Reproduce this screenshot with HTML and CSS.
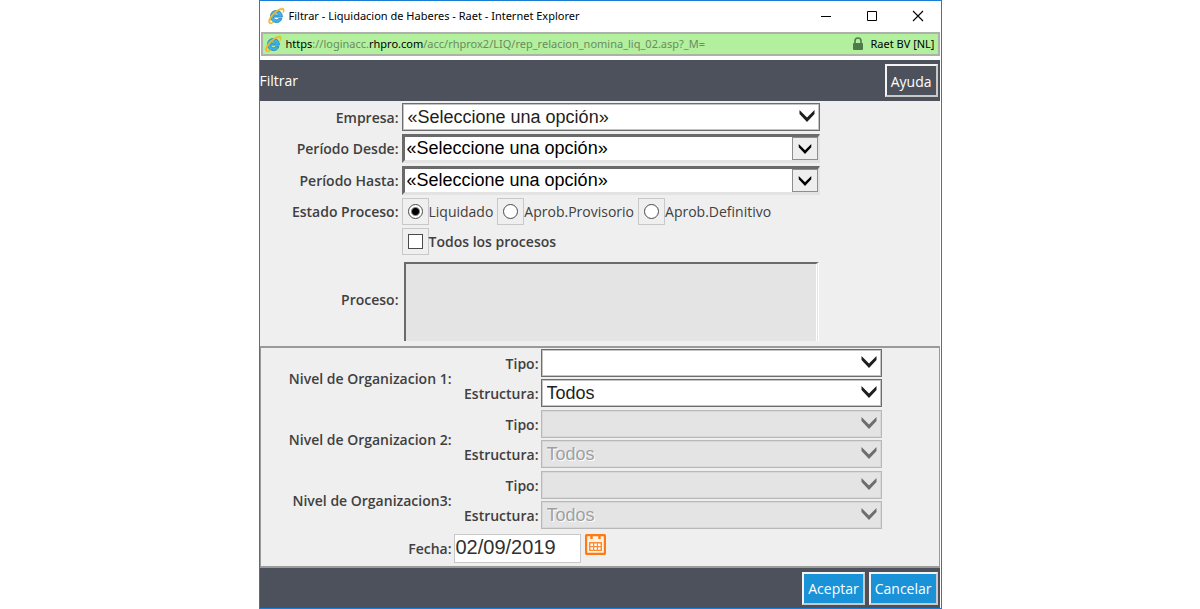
FILE: index.html
```html
<!DOCTYPE html>
<html lang="es">
<head>
<meta charset="utf-8">
<title>Filtrar - Liquidacion de Haberes - Raet - Internet Explorer</title>
<link rel="stylesheet" href="styles.css">
</head>
<body>
<svg class="defs" width="0" height="0" aria-hidden="true">
  <symbol id="ie" viewBox="0 0 18 18">
    <path d="M9.400 3.600a5.900 5.900 0 1 0 5.500 8h-3.300c-.6.900-1.300 1.200-2.300 1.200-1.600 0-2.600-1-2.700-2.700h8.700c.2-3.800-2-6.500-5.900-6.500zM6.700 7.900c.3-1.200 1.200-1.900 2.600-1.900s2.300.7 2.500 1.900z" fill="#42b3e8" stroke="#2384c4" stroke-width=".9"/>
    <path d="M3 16.700C-.5 15 3.300 8.300 8.500 4.300 12.500 1.200 17.500-.3 17 3.200c-.1.900-.5 1.700-.9 2.500.4-1.600.4-2.800-.8-3C12.800 2.300 8.600 5 5.500 8.900c-2.600 3.200-3.500 6.700-1.700 7 .9.100 2.100-.5 3.200-1.200-1.400 1.300-2.900 2.300-4 2z" fill="#f7c52a" stroke="#e8b01c" stroke-width=".7"/>
  </symbol>
  <symbol id="chevron" viewBox="0 0 16 12">
    <path d="M.5 0 L8 7.500 L15.500 0 V4 L8 12 L.5 4z" fill="currentColor"/>
  </symbol>
</svg>
<div class="window">
  <header class="titlebar">
    <svg class="ie-icon"><use href="#ie"/></svg>
    <span class="window-title">Filtrar - Liquidacion de Haberes - Raet - Internet Explorer</span>
    <div class="window-controls">
      <button class="window-button" aria-label="Minimizar"><svg width="12" height="12"><path d="M1 6.500h10" stroke="#000"/></svg></button>
      <button class="window-button" aria-label="Maximizar"><svg width="12" height="12"><path d="M1.500 1.500h9v9h-9z" fill="none" stroke="#000"/></svg></button>
      <button class="window-button" aria-label="Cerrar"><svg width="12" height="12"><path d="M1 1l10 10M11 1L1 11" stroke="#000" stroke-width="1.100"/></svg></button>
    </div>
  </header>
  <div class="address">
    <svg class="ie-icon"><use href="#ie"/></svg>
    <span class="url"><b>https</b>://loginacc.<b>rhpro.com</b>/acc/rhprox2/LIQ/rep_relacion_nomina_liq_02.asp?_M=</span>
    <svg class="lock" width="12" height="14" viewBox="0 0 12 14"><path d="M3 7V4a3 3 0 0 1 6 0v3" fill="none" stroke="#4f7a4c" stroke-width="1.600"/><rect x="1" y="6" width="10" height="7" rx="1" fill="#4f7a4c"/></svg>
    <span class="owner">Raet BV [NL]</span>
  </div>
  <main class="page">
    <div class="toolbar">
      <h1 class="heading">Filtrar</h1>
      <button class="button help">Ayuda</button>
    </div>
    <form class="filters">
      <div class="general">
        <label class="label" for="empresa">Empresa:</label>
        <div class="select">
          <select id="empresa"><option>«Seleccione una opción»</option></select>
          <svg class="arrow"><use href="#chevron"/></svg>
        </div>
        <label class="label" for="desde">Período Desde:</label>
        <div class="select inset">
          <select id="desde"><option>«Seleccione una opción»</option></select>
          <span class="arrow-box"><svg class="small-arrow"><use href="#chevron"/></svg></span>
        </div>
        <label class="label" for="hasta">Período Hasta:</label>
        <div class="select inset">
          <select id="hasta"><option>«Seleccione una opción»</option></select>
          <span class="arrow-box"><svg class="small-arrow"><use href="#chevron"/></svg></span>
        </div>
        <span class="label" id="estado">Estado Proceso:</span>
        <div class="choices" role="radiogroup" aria-labelledby="estado">
          <label class="choice"><span class="tick"><input type="radio" name="estado" checked></span>Liquidado</label>
          <label class="choice"><span class="tick"><input type="radio" name="estado"></span>Aprob.Provisorio</label>
          <label class="choice"><span class="tick"><input type="radio" name="estado"></span>Aprob.Definitivo</label>
        </div>
        <label class="choice all"><span class="tick"><input type="checkbox"></span>Todos los procesos</label>
        <label class="label" for="proceso">Proceso:</label>
        <select class="list" id="proceso" size="4" disabled></select>
      </div>
      <div class="levels">
        <div class="level">
          <span class="label level-name">Nivel de Organizacion 1:</span>
          <label class="label" for="tipo1">Tipo:</label>
          <div class="select"><select id="tipo1"><option></option></select><svg class="arrow"><use href="#chevron"/></svg></div>
          <label class="label" for="est1">Estructura:</label>
          <div class="select"><select id="est1"><option>Todos</option></select><svg class="arrow"><use href="#chevron"/></svg></div>
        </div>
        <div class="level">
          <span class="label level-name">Nivel de Organizacion 2:</span>
          <label class="label" for="tipo2">Tipo:</label>
          <div class="select off"><select id="tipo2" disabled><option></option></select><svg class="arrow"><use href="#chevron"/></svg></div>
          <label class="label" for="est2">Estructura:</label>
          <div class="select off"><select id="est2" disabled><option>Todos</option></select><svg class="arrow"><use href="#chevron"/></svg></div>
        </div>
        <div class="level">
          <span class="label level-name">Nivel de Organizacion3:</span>
          <label class="label" for="tipo3">Tipo:</label>
          <div class="select off"><select id="tipo3" disabled><option></option></select><svg class="arrow"><use href="#chevron"/></svg></div>
          <label class="label" for="est3">Estructura:</label>
          <div class="select off"><select id="est3" disabled><option>Todos</option></select><svg class="arrow"><use href="#chevron"/></svg></div>
        </div>
        <div class="date-row">
          <label class="label" for="fecha">Fecha:</label>
          <div class="date-field">
            <input class="date" id="fecha" type="text" value="02/09/2019">
            <button class="calendar" type="button" aria-label="Calendario">
              <svg width="21" height="21" viewBox="0 0 21 21">
                <rect x="1" y="1" width="19" height="19" rx="1.500" fill="#fff4e8" stroke="#ff7a12" stroke-width="2.400"/>
                <path d="M6.500 0v5M14.500 0v5" stroke="#ff7a12" stroke-width="2.400"/>
                <path d="M4 8h13v9H4z" fill="#ff8b2e"/>
                <path d="M5.500 9.500h2.500v2.500h-2.500zM9.300 9.500h2.500v2.500h-2.500zM13 9.500h2.500v2.500h-2.500zM5.500 13.300h2.500v2.500h-2.500zM9.300 13.300h2.500v2.500h-2.500zM13 13.300h2.500v2.500h-2.500z" fill="#fff"/>
              </svg>
            </button>
          </div>
        </div>
      </div>
      <div class="actions">
        <button class="button primary" type="button">Aceptar</button>
        <button class="button primary" type="button">Cancelar</button>
      </div>
    </form>
  </main>
</div>
</body>
</html>
```
FILE: styles.css
```css
* { box-sizing: border-box; }

body {
  margin: 0;
  background: #fff;
  color: #404040;
  font-family: "Open Sans", "Noto Sans", sans-serif;
  font-size: 14px;
  line-height: 20px;
}

button, input, select { font: inherit; margin: 0; }

.defs { position: absolute; }

.window {
  max-width: 683px;
  margin: 0 auto;
  border: 1px solid #1a7fd4;
  background: #fff;
}

.titlebar {
  display: flex;
  align-items: center;
  height: 31px;
  padding: 0 0 2px 7px;
  color: #000;
  font-family: "Noto Sans", sans-serif;
  font-size: 11px;
}

.ie-icon { width: 18px; height: 18px; flex: none; margin-right: 4px; }

.window-title { flex: 1; }

.window-controls { display: flex; }

.window-button {
  display: grid;
  place-items: center;
  width: 46px;
  height: 28px;
  padding: 0;
  border: 0;
  background: none;
}

.address {
  display: flex;
  align-items: center;
  height: 24px;
  margin: 0 1px;
  padding: 0 3px 0 1px;
  border: 2px solid #acb2aa;
  background: #b2f09d;
  color: #6c8a64;
  font-family: "Noto Sans", sans-serif;
  font-size: 11px;
}

.url { flex: 1; }
.url b { color: #000; font-weight: 400; }
.lock { margin-right: 6px; }
.owner { color: #000; }

.page { margin: 4px 1px 0 0; background: #efefef; }

.toolbar, .actions {
  display: flex;
  align-items: center;
  background: #4d515c;
}

.toolbar {
  justify-content: space-between;
  height: 41px;
  padding-right: 2px;
}

.heading { margin: 0; color: #fff; font-size: 14px; font-weight: 400; }

.button {
  height: 33px;
  padding: 2px 4px 0;
  border: 2px solid #f4f4f4;
  border-right-color: #c9c9c9;
  border-bottom-color: #c9c9c9;
  background: #4d515c;
  color: #fff;
  font-size: 14px;
}

.primary { background: #1a92d8; }

.general {
  display: grid;
  grid-template-columns: 139px minmax(0, 418px);
  gap: 3px;
  align-items: center;
  padding: 2px 0 5px;
}

.label {
  padding-top: 1px;
  color: #404040;
  font-size: 14px;
  font-weight: 600;
  text-align: right;
}

.select {
  display: grid;
  grid-template-columns: 1fr auto;
  align-items: center;
  height: 28px;
  border: 1px solid #6d6d6d;
  box-shadow: inset 0 0 0 1px #c4c4c4;
  background: #fff;
  color: #1e1e1e;
}

.select select {
  grid-area: 1 / 1 / 2 / 3;
  width: 100%;
  height: 24px;
  padding: 0 24px 0 5px;
  border: 0;
  appearance: none;
  background: none;
  color: inherit;
  font-family: "Liberation Sans", Arial, sans-serif;
  font-size: 18px;
  opacity: 1;
}

.arrow {
  grid-area: 1 / 2;
  width: 16px;
  height: 12px;
  margin: 0 4px 2px 0;
  pointer-events: none;
}

.inset {
  height: 29px;
  border-style: solid;
  border-width: 3px 2px 3px 3px;
  border-color: #6a6a6a #e3e3e3 #e3e3e3 #6a6a6a;
  box-shadow: none;
  color: #000;
}

.inset select { height: 22px; padding: 0 24px 2px 2px; }

.arrow-box {
  grid-area: 1 / 2;
  display: grid;
  place-items: center;
  width: 26px;
  height: 23px;
  border: 1px solid #8e8e8e;
  background: #eee;
  pointer-events: none;
}

.small-arrow { width: 14px; height: 10px; }

.off {
  border-color: #b8b8b8;
  box-shadow: inset 0 0 0 1px #d8d8d8;
  background: #e4e4e4;
  color: #6d6d6d;
}

.off select { color: #a0a0a0; text-shadow: 1px 1px #fff; }

.choices { display: flex; gap: 4px; }

.choice { display: flex; align-items: center; font-size: 14px; white-space: nowrap; }

.all { grid-column: 2; font-weight: 600; }

.tick {
  display: grid;
  place-items: center;
  width: 27px;
  height: 27px;
  border: 1px solid #c8c8c8;
}

.tick input {
  width: 15px;
  height: 15px;
  border: 1px solid #4a4a4a;
  appearance: none;
  background: #fff;
}

.tick input[type="radio"] { border-radius: 50%; }

.tick input[type="radio"]:checked {
  background: radial-gradient(circle, #000 3px, #fff 5px);
}

.list {
  width: 415px;
  max-width: 100%;
  height: 79px;
  margin: 4px 0 0 2px;
  border: 2px solid #6a6a6a;
  border-right: 3px double #fff;
  border-bottom: 0;
  border-radius: 0;
  background: #e4e4e4;
  opacity: 1;
}

.levels {
  display: grid;
  gap: 3px;
  padding: 1px 0 3px;
  border: 2px solid #9a9a9a;
  border-right-width: 1px;
  border-left-width: 1px;
}

.level {
  display: grid;
  grid-template-columns: 191px 85px minmax(0, 341px);
  gap: 2px;
  align-items: center;
}

.level-name { grid-row: 1 / 3; }

.date-row {
  display: grid;
  grid-template-columns: 191px 1fr;
  gap: 2px;
  align-items: center;
  padding-top: 2px;
}

.date-field { display: flex; gap: 4px; }

.date {
  width: 127px;
  height: 29px;
  padding: 0 0 3px 1px;
  border: 1px solid #c8c8c8;
  background: #fff;
  color: #303030;
  font-family: "Liberation Sans", Arial, sans-serif;
  font-size: 20px;
}

.calendar {
  height: 21px;
  padding: 0;
  border: 0;
  background: none;
  line-height: 0;
}

.actions {
  justify-content: flex-end;
  gap: 4px;
  height: 40px;
  padding-right: 2px;
}
```
